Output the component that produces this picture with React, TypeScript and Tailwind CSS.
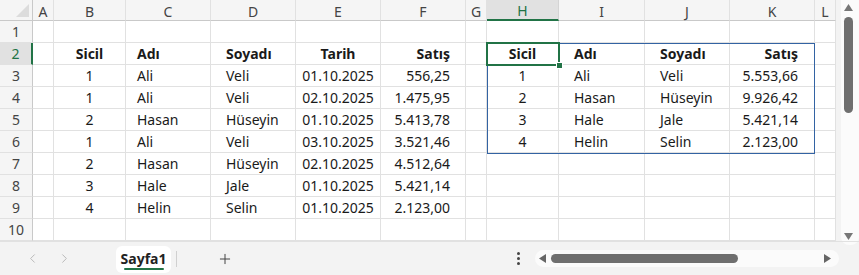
import React from "react";
import { ChevronLeft, ChevronRight, Plus } from "lucide-react";

type Col = { key: string; cls: string };

const cols: Col[] = [
  { key: "A", cls: "" },
  { key: "B", cls: "justify-center" },
  { key: "C", cls: "justify-start pl-[11px]" },
  { key: "D", cls: "justify-start pl-[15px]" },
  { key: "E", cls: "justify-center" },
  { key: "F", cls: "justify-end pr-[15px]" },
  { key: "G", cls: "" },
  { key: "H", cls: "justify-center" },
  { key: "I", cls: "justify-start pl-[15px]" },
  { key: "J", cls: "justify-start pl-[15px]" },
  { key: "K", cls: "justify-end pr-[16px]" },
  { key: "L", cls: "" },
];

const left: string[][] = [
  ["1", "Ali", "Veli", "01.10.2025", "556,25"],
  ["1", "Ali", "Veli", "02.10.2025", "1.475,95"],
  ["2", "Hasan", "Hüseyin", "01.10.2025", "5.413,78"],
  ["1", "Ali", "Veli", "03.10.2025", "3.521,46"],
  ["2", "Hasan", "Hüseyin", "02.10.2025", "4.512,64"],
  ["3", "Hale", "Jale", "01.10.2025", "5.421,14"],
  ["4", "Helin", "Selin", "01.10.2025", "2.123,00"],
];

const right: string[][] = [
  ["1", "Ali", "Veli", "5.553,66"],
  ["2", "Hasan", "Hüseyin", "9.926,42"],
  ["3", "Hale", "Jale", "5.421,14"],
  ["4", "Helin", "Selin", "2.123,00"],
];

function cellValue(row: number, col: string): { text: string; bold: boolean } {
  const lIdx = ["B", "C", "D", "E", "F"].indexOf(col);
  const rIdx = ["H", "I", "J", "K"].indexOf(col);
  if (row === 2) {
    if (lIdx >= 0) return { text: ["Sicil", "Adı", "Soyadı", "Tarih", "Satış"][lIdx], bold: true };
    if (rIdx >= 0) return { text: ["Sicil", "Adı", "Soyadı", "Satış"][rIdx], bold: true };
  }
  if (row >= 3 && row <= 9 && lIdx >= 0) return { text: left[row - 3][lIdx], bold: false };
  if (row >= 3 && row <= 6 && rIdx >= 0) return { text: right[row - 3][rIdx], bold: false };
  return { text: "", bold: false };
}

export default function App() {
  const rows = [1, 2, 3, 4, 5, 6, 7, 8, 9, 10];
  return (
    <div
      className="w-[859px] h-[275px] overflow-hidden bg-[#f3f3f3] text-[#1a1a1a] flex flex-col"
      style={{ fontFamily: '"Noto Sans", "Open Sans", sans-serif' }}
    >
      <div className="flex h-[241px]">
        <div className="relative w-[836px] h-[241px] bg-white">
          <div className="grid grid-cols-[33px_21px_72px_85px_85px_85px_85px_21px_72px_86px_85px_85px_21px] grid-rows-[21px_repeat(10,22px)] text-[14px]">
            {/* corner */}
            <div className="relative bg-[#f5f5f5] border-r border-b border-[#c9c9c9]">
              <div className="absolute right-[3px] bottom-[3px] w-0 h-0 border-l-[13px] border-l-transparent border-b-[13px] border-b-[#dcdcdc]" />
            </div>
            {cols.map((c) =>
              c.key === "H" ? (
                <div
                  key={c.key}
                  className="flex items-center justify-center pt-[2px] bg-[#e1e1e1] border-r border-[#d4d4d4] border-b-2 border-b-[#217346] text-[#217346]"
                >
                  {c.key}
                </div>
              ) : (
                <div
                  key={c.key}
                  className="flex items-center justify-center pt-[2px] bg-[#f5f5f5] border-r border-[#e1e1e1] border-b border-b-[#c9c9c9] text-[#444]"
                >
                  {c.key}
                </div>
              )
            )}
            {rows.map((r) => (
              <React.Fragment key={r}>
                {r === 2 ? (
                  <div className="flex items-center justify-center bg-[#e1e1e1] border-b border-[#e1e1e1] border-r-2 border-r-[#217346] text-[#217346]">
                    {r}
                  </div>
                ) : (
                  <div className="flex items-center justify-center bg-[#f5f5f5] border-b border-[#e1e1e1] border-r border-r-[#c9c9c9] text-[#444]">
                    {r}
                  </div>
                )}
                {cols.map((c) => {
                  const v = cellValue(r, c.key);
                  return (
                    <div
                      key={c.key}
                      className={`flex items-center whitespace-nowrap border-r border-b border-[#e1e1e1] ${c.cls} ${v.bold ? "font-bold" : ""}`}
                    >
                      {v.text}
                    </div>
                  );
                })}
              </React.Fragment>
            ))}
          </div>
          {/* table border */}
          <div className="absolute left-[487px] top-[43px] w-[328px] h-[111px] border border-[#3363a3] pointer-events-none" />
          {/* selected cell */}
          <div className="absolute left-[486px] top-[42px] w-[74px] h-[24px] border-2 border-[#217346] pointer-events-none" />
          <div className="absolute left-[556px] top-[62px] w-[7px] h-[7px] bg-[#217346] border border-white" />
        </div>
        {/* vertical scrollbar */}
        <div className="flex-1 pl-[5px]">
          <div className="relative h-[245px] bg-[#fbfbfb] rounded-b-[8px]">
            <svg className="absolute left-[3px] top-[4px]" width="9" height="7" viewBox="0 0 9 7">
              <path d="M4.5 0 L9 7 L0 7 Z" fill="#777" />
            </svg>
            <div className="absolute left-[3px] top-[17px] w-[9px] h-[96px] rounded-full bg-[#6f6f6f]" />
            <svg className="absolute left-[3px] top-[233px]" width="9" height="7" viewBox="0 0 9 7">
              <path d="M0 0 L9 0 L4.5 7 Z" fill="#777" />
            </svg>
          </div>
        </div>
      </div>
      {/* bottom bar */}
      <div className="relative flex items-center h-[34px] border-t border-[#e1e1e1]">
        <div className="w-[116px] flex items-center">
          <ChevronLeft className="ml-[25px] text-[#b5b5b5]" size={15} strokeWidth={1.5} />
          <ChevronRight className="ml-[17px] text-[#b5b5b5]" size={15} strokeWidth={1.5} />
        </div>
        <div className="relative w-[55px] h-[27px] mt-[2px] bg-white rounded-[6px] flex items-center justify-center font-bold text-[14px] text-[#222]">
          <span className="-mt-[3px]">Sayfa1</span>
          <div className="absolute left-[8px] right-[7px] bottom-[3px] h-[2px] bg-[#217346] rounded-full" />
        </div>
        <div className="ml-[5px] w-px h-[16px] bg-[#d0d0d0]" />
        <Plus className="ml-[40px] text-[#444]" size={16} strokeWidth={1.5} />
        <div className="ml-[284px] flex flex-col gap-[2px] items-center">
          <div className="w-[3px] h-[3px] rounded-full bg-[#444]" />
          <div className="w-[3px] h-[3px] rounded-full bg-[#444]" />
          <div className="w-[3px] h-[3px] rounded-full bg-[#444]" />
        </div>
        <div className="relative ml-[15px] w-[304px] h-[17px] rounded-full bg-[#fbfbfb]">
          <svg className="absolute left-[4px] top-[4px]" width="7" height="9" viewBox="0 0 7 9">
            <path d="M7 0 L7 9 L0 4.5 Z" fill="#666" />
          </svg>
          <div className="absolute left-[16px] top-[4px] w-[187px] h-[9px] rounded-full bg-[#6f6f6f]" />
          <svg className="absolute right-[8px] top-[4px]" width="7" height="9" viewBox="0 0 7 9">
            <path d="M0 0 L7 4.5 L0 9 Z" fill="#666" />
          </svg>
        </div>
      </div>
    </div>
  );
}
